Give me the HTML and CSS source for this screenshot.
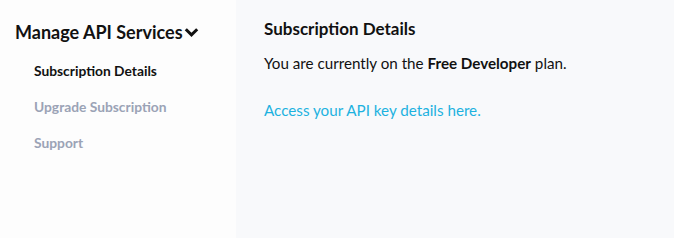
FILE: index.html
```html
<!DOCTYPE html>
<html>
<head>
<meta charset="utf-8">
<link rel="stylesheet" href="styles.css">
</head>
<body>
<div class="layout">
  <aside class="sidebar">
    <div class="menu-title">Manage API Services
      <svg class="chev" width="15" height="11" viewBox="0 0 15 11"><path d="M1.8 2.2 L7.5 7.9 L13.2 2.2" fill="none" stroke="#111" stroke-width="3"/></svg>
    </div>
    <ul class="menu">
      <li class="item active">Subscription Details</li>
      <li class="item">Upgrade Subscription</li>
      <li class="item">Support</li>
    </ul>
  </aside>
  <main class="content">
    <h1 class="title">Subscription Details</h1>
    <p class="text">You are currently on the <b>Free Developer</b> plan.</p>
    <a class="link" href="#">Access your API key details here.</a>
  </main>
</div>
</body>
</html>
```
FILE: styles.css
```css
html, body { margin: 0; padding: 0; height: 100%; }
body { font-family: Lato, "Liberation Sans", sans-serif; color: #111; }
.layout { display: flex; height: 238px; }
.sidebar { width: 236px; background: #fdfdfd; padding: 20px 0 0 15px; box-sizing: border-box; }
.menu-title { display: flex; align-items: center; gap: 1px; font-size: 18px; font-weight: 700; height: 24px; }
.chev { margin-top: 1px; }
.menu { list-style: none; margin: 15px 0 0; padding: 0 0 0 19px; }
.item { font-size: 13.8px; font-weight: 700; color: #9ba3b6; height: 36px; line-height: 24px; }
.item.active { color: #111; }
.content { flex: 1; background: #f8f9fb; padding: 18px 0 0 28px; }
.title { margin: 0; font-size: 17px; font-weight: 700; line-height: 22px; }
.text { margin: 12px 0 0; font-size: 15.2px; line-height: 22px; }
.text b { font-weight: 700; }
.link { display: block; margin-top: 25px; font-size: 15.2px; line-height: 22px; color: #1db2e0; text-decoration: none; }
```
